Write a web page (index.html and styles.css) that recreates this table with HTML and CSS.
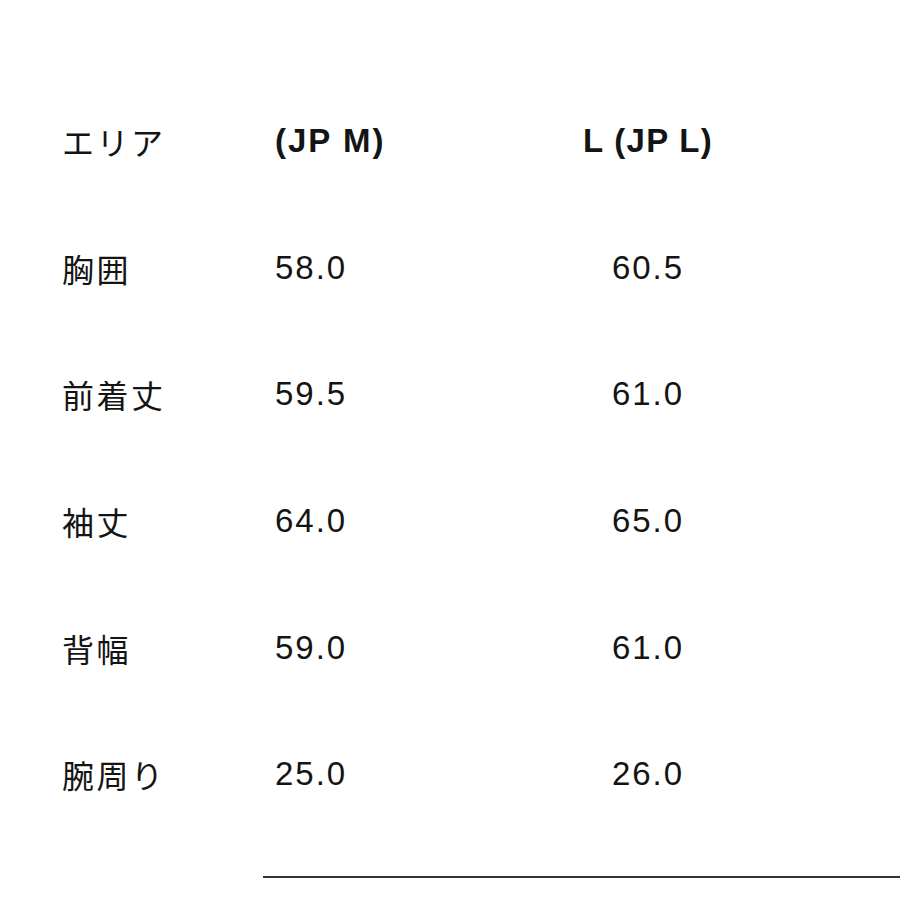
FILE: index.html
```html
<!DOCTYPE html>
<html lang="ja">
<head>
<meta charset="utf-8">
<title>サイズ表</title>
<link rel="stylesheet" href="styles.css">
</head>
<body>
<div class="page">
  <div class="table">
    <div class="row head">
      <div class="c1">エリア</div>
      <div class="c2">(JP M)</div>
      <div class="c3">L (JP L)</div>
    </div>
    <div class="row">
      <div class="c1">胸囲</div>
      <div class="c2">58.0</div>
      <div class="c3">60.5</div>
    </div>
    <div class="row">
      <div class="c1">前着丈</div>
      <div class="c2">59.5</div>
      <div class="c3">61.0</div>
    </div>
    <div class="row">
      <div class="c1">袖丈</div>
      <div class="c2">64.0</div>
      <div class="c3">65.0</div>
    </div>
    <div class="row">
      <div class="c1">背幅</div>
      <div class="c2">59.0</div>
      <div class="c3">61.0</div>
    </div>
    <div class="row">
      <div class="c1">腕周り</div>
      <div class="c2">25.0</div>
      <div class="c3">26.0</div>
    </div>
  </div>
  <div class="rule"></div>
</div>
</body>
</html>
```
FILE: styles.css
```css
html, body {
  margin: 0;
  padding: 0;
  background: #fff;
}
.page {
  width: 900px;
  height: 900px;
  overflow: hidden;
  font-family: "Liberation Sans", "Noto Sans CJK JP", sans-serif;
  color: #141414;
  font-size: 33px;
  letter-spacing: 2px;
  padding-top: 78px;
  box-sizing: border-box;
}
.table {
  display: flex;
  flex-direction: column;
}
.row {
  display: grid;
  grid-template-columns: 213px 285px 176px;
  padding-left: 62px;
  height: 126.6px;
  align-items: center;
}
.head {
  font-weight: bold;
}
.head .c3 {
  letter-spacing: 1.3px;
}
.c1 {
  font-family: "Noto Sans CJK JP", sans-serif;
  font-weight: 400;
  font-size: 32px;
  letter-spacing: 2.5px;
}
.c3 {
  text-align: center;
}
.rule {
  margin-top: 38px;
  margin-left: 263px;
  height: 2px;
  background: #333;
}
```
